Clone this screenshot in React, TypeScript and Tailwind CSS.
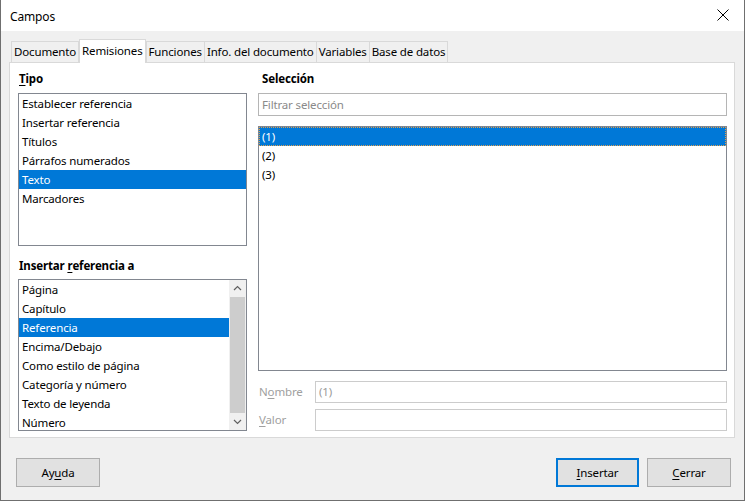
import React from "react";

const font = { fontFamily: '"Noto Sans", "Open Sans", sans-serif' };

function ListBox({
  items,
  selected,
  className,
  focusSel,
  scroll,
}: {
  items: string[];
  selected: number;
  className: string;
  focusSel?: boolean;
  scroll?: boolean;
}) {
  return (
    <div className={`relative flex overflow-hidden border border-[#828790] bg-white ${className}`}>
      <div className="flex flex-1 flex-col">
        {items.map((t, i) => (
          <div
            key={i}
            className={`flex h-[19px] shrink-0 items-center pl-[3px] leading-none ${
              i === selected ? "bg-[#0078d7] text-white" : "text-black"
            } ${i === selected && focusSel ? "outline outline-1 -outline-offset-1 outline-dotted outline-[#e0a050]" : ""}`}
          >
            {t}
          </div>
        ))}
      </div>
      {scroll && (
        <div className="flex w-[17px] shrink-0 flex-col bg-[#f0f0f0]">
          <div className="flex h-[17px] items-center justify-center">
            <svg width="9" height="6" viewBox="0 0 9 6">
              <path d="M1 5 L4.5 1.5 L8 5" fill="none" stroke="#606060" strokeWidth="1.2" />
            </svg>
          </div>
          <div className="flex-1 pt-[0px] pb-[1px]">
            <div className="mx-[1px] h-[116px] bg-[#cdcdcd]" />
          </div>
          <div className="flex h-[17px] items-center justify-center">
            <svg width="9" height="6" viewBox="0 0 9 6">
              <path d="M1 1 L4.5 4.5 L8 1" fill="none" stroke="#606060" strokeWidth="1.2" />
            </svg>
          </div>
        </div>
      )}
    </div>
  );
}

function U({ children }: { children: React.ReactNode }) {
  return <span className="underline underline-offset-[2px]">{children}</span>;
}

export default function App() {
  const tabs = ["Documento", "Remisiones", "Funciones", "Info. del documento", "Variables", "Base de datos"];
  return (
    <div
      style={font}
      className="flex h-[501px] w-[745px] flex-col overflow-hidden border-x border-b border-[#6f6f6f] bg-[#f0f0f0] text-[11.5px] tracking-[-0.15px] text-black"
    >
      {/* Title bar */}
      <div className="flex h-[31px] shrink-0 items-center justify-between bg-white pl-[9px] pr-[15px] pt-[2px]">
        <span className="text-[12px]">Campos</span>
        <svg width="12" height="12" viewBox="0 0 12 12" className="-mt-[4px]">
          <path d="M0.5 0.5 L11.5 11.5 M11.5 0.5 L0.5 11.5" stroke="#000" strokeWidth="1" />
        </svg>
      </div>

      {/* Tabs */}
      <div className="flex h-[31px] shrink-0 items-end pl-[10px] pt-[8px]">
        {tabs.map((t, i) =>
          i === 1 ? (
            <div
              key={t}
              className="relative z-10 -mb-px flex h-[24px] items-center border border-b-0 border-[#d9d9d9] bg-white px-[2px] pb-[2px]"
            >
              {t}
            </div>
          ) : (
            <div
              key={t}
              className={`flex h-[21px] items-center border border-b-0 border-[#d9d9d9] bg-[#f0f0f0] px-[2px] ${
                i === 0 || i === 2 ? "" : "-ml-px"
              }`}
            >
              {t}
            </div>
          )
        )}
      </div>

      {/* Panel */}
      <div className="ml-[8px] mr-[9px] flex h-[376px] shrink-0 gap-[11px] border border-[#d9d9d9] bg-white pl-[8px] pr-[7px]">
        {/* Left column */}
        <div className="flex w-[229px] flex-col">
          <div className="flex h-[30px] items-center pl-[1px] pt-[2px] font-bold">
            <U>T</U>ipo
          </div>
          <ListBox
            className="h-[153px]"
            selected={4}
            items={["Establecer referencia", "Insertar referencia", "Títulos", "Párrafos numerados", "Texto", "Marcadores"]}
          />
          <div className="flex h-[33px] items-center pl-[1px] pt-[7px] font-bold">
            Insertar&nbsp;<U>r</U>eferencia a
          </div>
          <ListBox
            className="h-[152px]"
            selected={2}
            scroll
            items={[
              "Página",
              "Capítulo",
              "Referencia",
              "Encima/Debajo",
              "Como estilo de página",
              "Categoría y número",
              "Texto de leyenda",
              "Número",
            ]}
          />
        </div>

        {/* Right column */}
        <div className="flex w-[469px] flex-col">
          <div className="flex h-[30px] items-center pl-[4px] pt-[2px] font-bold">Selección</div>
          <div className="flex h-[23px] items-center border border-[#b5b5b5] bg-white pl-[3px] text-[#8a8a8a]">
            Filtrar selección
          </div>
          <div className="h-[10px]" />
          <ListBox className="h-[245px]" selected={0} focusSel items={["(1)", "(2)", "(3)"]} />
          <div className="mt-[10px] flex h-[22px] items-center">
            <div className="w-[57px] pl-[1px] text-[#a0a0a0]">
              N<U>o</U>mbre
            </div>
            <div className="flex h-[22px] flex-1 items-center border border-[#cccccc] bg-white pl-[3px] text-[#9a9a9a]">
              (1)
            </div>
          </div>
          <div className="mt-[6px] flex h-[22px] items-center">
            <div className="w-[57px] pl-[1px] text-[#a0a0a0]">
              <U>V</U>alor
            </div>
            <div className="h-[22px] flex-1 border border-[#cccccc] bg-white" />
          </div>
        </div>
      </div>

      {/* Buttons */}
      <div className="flex flex-1 items-start pl-[15px] pr-[13px] pt-[20px]">
        <button className="flex h-[29px] w-[84px] items-center justify-center border border-[#adadad] bg-[#e1e1e1]">
          Ay<U>u</U>da
        </button>
        <div className="flex-1" />
        <button className="flex h-[29px] w-[83px] items-center justify-center border-2 border-[#0078d7] bg-[#e1e1e1]">
          <U>I</U>nsertar
        </button>
        <button className="ml-[8px] flex h-[29px] w-[84px] items-center justify-center border border-[#adadad] bg-[#e1e1e1]">
          <U>C</U>errar
        </button>
      </div>
    </div>
  );
}
